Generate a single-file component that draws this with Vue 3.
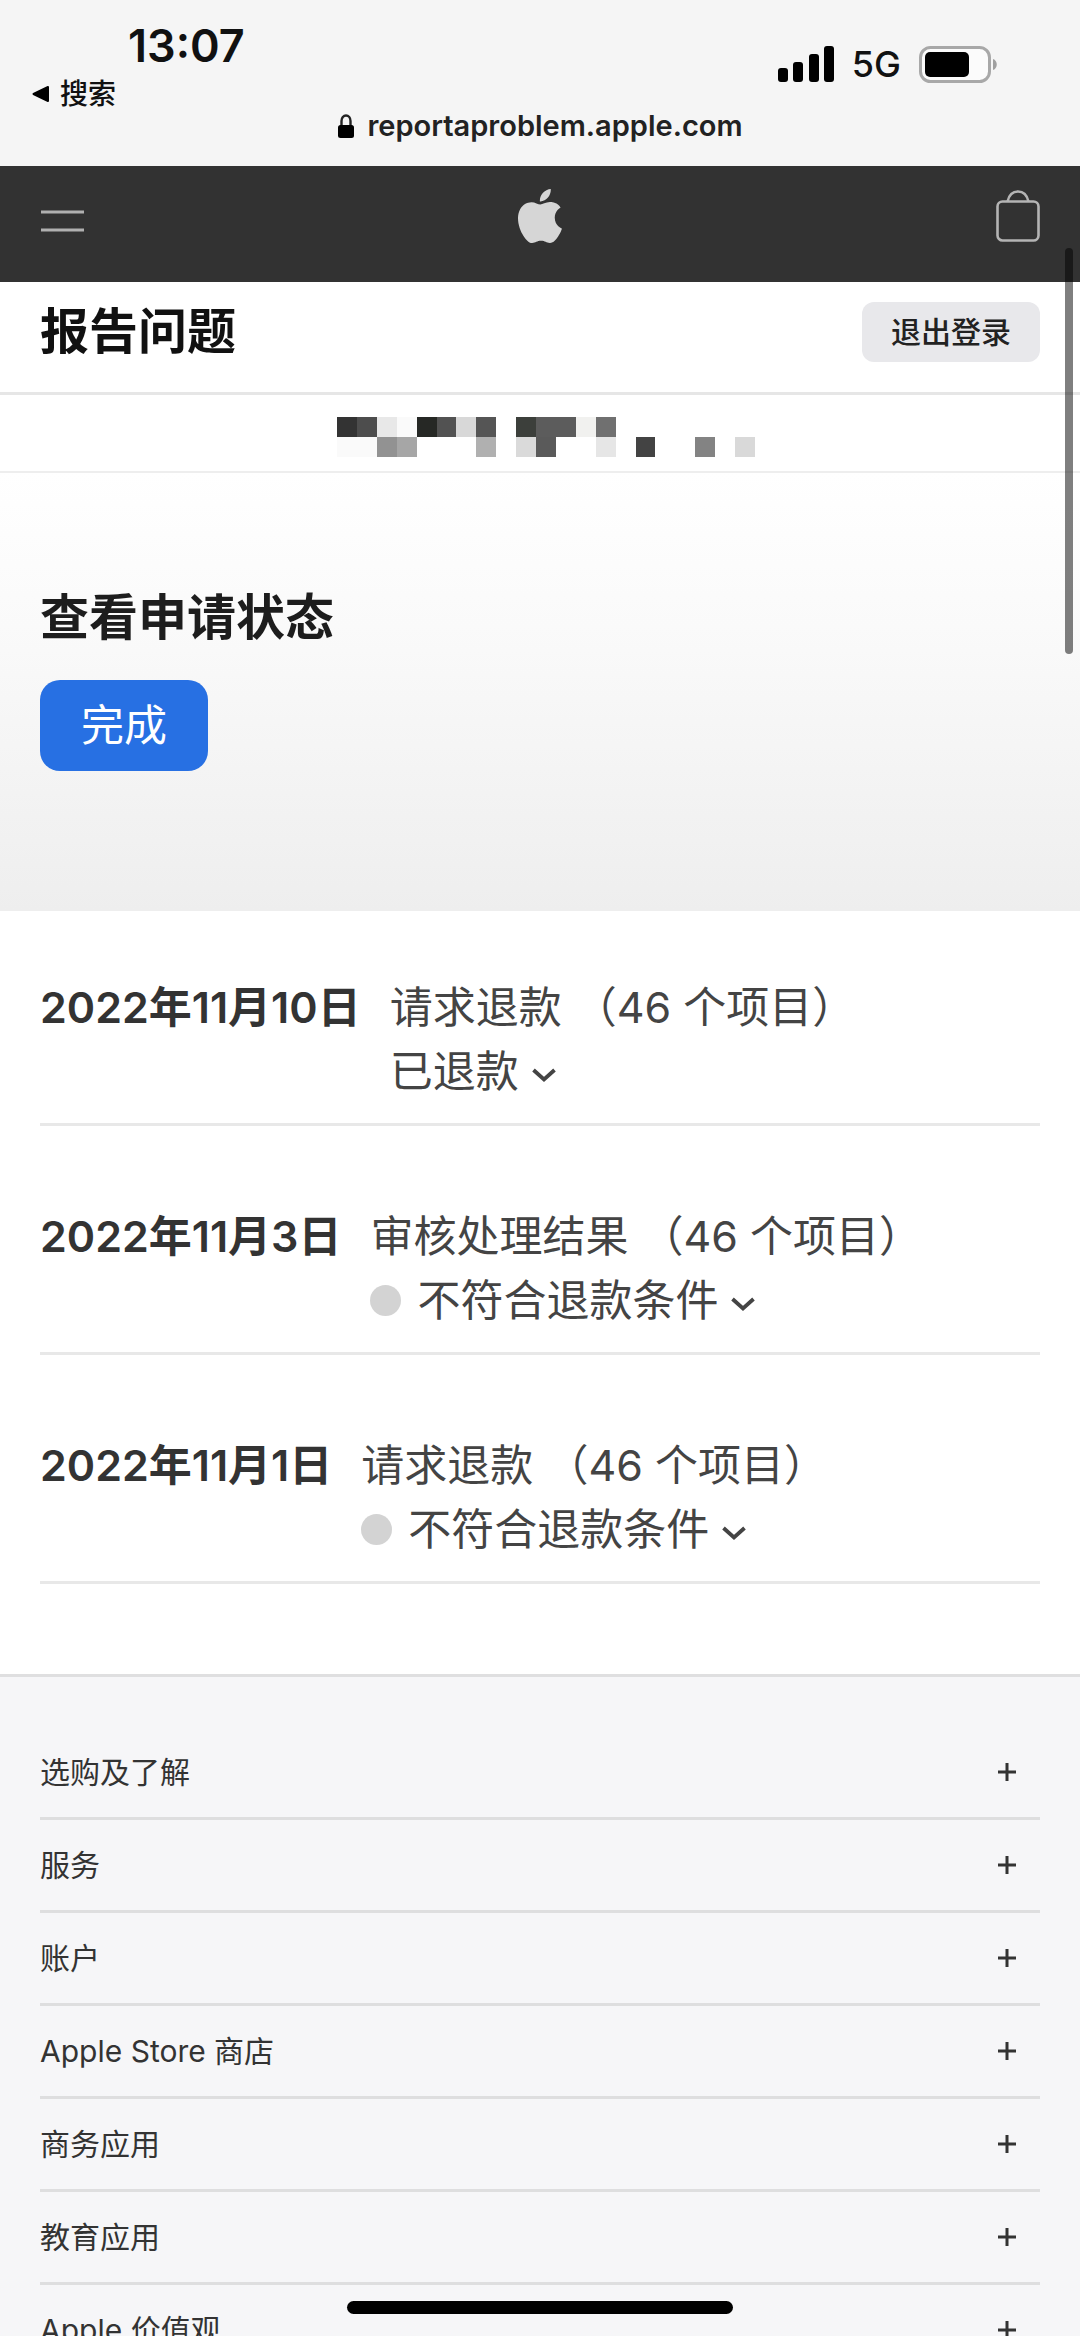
<script setup>
import { ref } from "vue";

const requests = [
  { date: "2022年11月10日", title: "请求退款", count: 46, status: "已退款", dot: false },
  { date: "2022年11月3日", title: "审核处理结果", count: 46, status: "不符合退款条件", dot: true },
  { date: "2022年11月1日", title: "请求退款", count: 46, status: "不符合退款条件", dot: true },
];

const sections = ["选购及了解", "服务", "账户", "Apple Store 商店", "商务应用", "教育应用", "Apple 价值观"];

const opened = ref(null); // index of the expanded request

// masked account name: [column, row, color]
const mosaic = [
  [0, 0, "#333333"], [1, 0, "#4d4d4d"], [2, 0, "#e8e8e8"], [3, 0, "#fafafa"],
  [4, 0, "#262825"], [5, 0, "#525252"], [6, 0, "#d8d8d8"], [7, 0, "#555555"],
  [9, 0, "#3c3f3b"], [10, 0, "#5c5c5c"], [11, 0, "#5c5c5c"], [12, 0, "#f1f1ef"], [13, 0, "#707070"],
  [0, 1, "#fafafa"], [1, 1, "#fafafa"], [2, 1, "#929292"], [3, 1, "#a6a6a6"],
  [7, 1, "#b0b0b0"], [9, 1, "#dadada"], [10, 1, "#5a5a5a"], [13, 1, "#e6e6e6"],
  [15, 1, "#434343"], [18, 1, "#838383"], [20, 1, "#d9d9d9"],
];

function toggle(i) {
  opened.value = opened.value === i ? null : i;
}
</script>

<template>
  <div class="screen">
    <header class="chrome">
      <div class="chrome-left">
        <time class="clock">13:07</time>
        <a class="back" href="#">
          <svg width="18" height="18" viewBox="0 0 18 18" aria-hidden="true">
            <path d="M1.5 9 16 2v14z" fill="#000" stroke="#000" stroke-width="2" stroke-linejoin="round" />
          </svg>
          搜索
        </a>
      </div>
      <div class="address">
        <svg width="18" height="24" viewBox="0 0 18 24" aria-hidden="true">
          <path d="M4.5 12V7a4.5 5.5 0 0 1 9 0v5" fill="none" stroke="#222" stroke-width="2.4" />
          <rect x="1" y="11" width="16" height="13" rx="2.5" />
        </svg>
        <span>reportaproblem.apple.com</span>
      </div>
      <div class="indicators">
        <svg width="56" height="36" viewBox="0 0 56 36" aria-hidden="true">
          <rect x="0" y="22" width="10" height="14" rx="3" />
          <rect x="15" y="16" width="10" height="20" rx="3" />
          <rect x="31" y="8" width="10" height="28" rx="3" />
          <rect x="46" y="0" width="10" height="36" rx="3" />
        </svg>
        <span class="network">5G</span>
        <svg width="79" height="37" viewBox="0 0 79 37" aria-hidden="true">
          <rect x="1.5" y="1.5" width="69" height="34" rx="10" fill="#fbfbfb" stroke="#a8a8a8" stroke-width="3" />
          <rect x="6" y="6" width="44" height="25" rx="5" />
          <path d="M74 13c5 1.500 5 9.500 0 11z" fill="#a0a0a0" />
        </svg>
      </div>
    </header>

    <nav class="globalnav">
      <button class="icon-button" type="button" aria-label="菜单">
        <svg width="44" height="24" viewBox="0 0 44 24">
          <path d="M1 3h43M1 21h43" stroke="#b0b0b0" stroke-width="3" />
        </svg>
      </button>
      <a class="logo" href="#" aria-label="Apple">
        <svg width="54" height="54" viewBox="0 0 24 24">
          <path fill="#d6d6d6" d="M12.152 6.896c-.948 0-2.415-1.078-3.96-1.04-2.04.027-3.91 1.183-4.961 3.014-2.117 3.675-.546 9.103 1.519 12.09 1.013 1.454 2.208 3.09 3.792 3.039 1.52-.065 2.09-.987 3.935-.987 1.831 0 2.35.987 3.96.948 1.637-.026 2.676-1.48 3.676-2.948 1.156-1.688 1.636-3.325 1.662-3.415-.039-.013-3.182-1.221-3.22-4.857-.026-3.04 2.48-4.494 2.597-4.559-1.429-2.09-3.623-2.324-4.39-2.376-2-.156-3.675 1.09-4.61 1.09zM15.53 3.83c.843-1.012 1.4-2.427 1.245-3.83-1.207.052-2.662.805-3.532 1.818-.78.896-1.454 2.338-1.273 3.714 1.338.104 2.715-.688 3.559-1.701" />
        </svg>
      </a>
      <button class="icon-button bag" type="button" aria-label="购物袋">
        <svg width="44" height="52" viewBox="0 0 44 52" fill="none" stroke="#b4b4b4" stroke-width="2.6">
          <rect x="1.500" y="11.500" width="41" height="39" rx="5" />
          <path d="M11.500 11.500C13 5 17 1.500 22 1.500s9 3.500 10.500 10" />
        </svg>
      </button>
    </nav>

    <div class="titlebar">
      <h1>报告问题</h1>
      <button class="signout" type="button">退出登录</button>
    </div>

    <div class="account">
      <svg width="418" height="40" viewBox="0 0 21 2" preserveAspectRatio="none" shape-rendering="crispEdges" aria-hidden="true">
        <rect v-for="[x, y, color] in mosaic" :key="`${x}-${y}`" :x="x" :y="y" width="1" height="1" :fill="color" />
      </svg>
    </div>

    <section class="hero">
      <h2>查看申请状态</h2>
      <button class="done" type="button">完成</button>
    </section>

    <main class="requests">
      <article v-for="(item, i) in requests" :key="item.date" class="request">
        <h3>{{ item.date }}</h3>
        <div>
          <p>{{ item.title }} （{{ item.count }} 个项目）</p>
          <button class="status" type="button" :aria-expanded="opened === i" @click="toggle(i)">
            <span v-if="item.dot" class="dot"></span>
            <span>{{ item.status }}</span>
            <svg class="chevron" width="26" height="16" viewBox="0 0 26 16" aria-hidden="true">
              <path d="M2.500 3 13 12.500 23.500 3" fill="none" stroke="#444" stroke-width="3.800" />
            </svg>
          </button>
        </div>
      </article>
    </main>

    <footer class="footer">
      <button v-for="name in sections" :key="name" class="section" type="button">
        <span>{{ name }}</span>
        <svg width="18" height="18" viewBox="0 0 18 18" aria-hidden="true">
          <path d="M0 9h18M9 0v18" stroke="#333" stroke-width="3" />
        </svg>
      </button>
    </footer>

    <div class="scrollbar"></div>
    <div class="home-indicator"></div>
  </div>
</template>

<style>
body {
  margin: 0;
}
</style>

<style scoped>
.screen {
  --gutter: 40px;
  position: relative;
  height: 100vh;
  overflow: hidden;
  background: #fff;
  color: #111;
  font-family: Inter, "Noto Sans CJK SC", sans-serif;
}

h1,
h2,
h3,
p {
  margin: 0;
}

button {
  border: 0;
  padding: 0;
  background: none;
  color: inherit;
  font: inherit;
}

a {
  color: inherit;
  text-decoration: none;
}

svg {
  display: block;
  flex: none;
}

.chrome {
  display: grid;
  grid-template-columns: 1fr auto 1fr;
  box-sizing: border-box;
  height: 166px;
  padding: 20px 32px;
  background: #f5f5f5;
}

.chrome-left {
  display: flex;
  flex-direction: column;
  align-items: flex-start;
  gap: 4px;
}

.clock {
  padding-left: 96px;
  font-size: 45px;
  font-weight: 600;
  line-height: 52px;
}

.back {
  display: flex;
  align-items: center;
  gap: 10px;
  font-size: 28px;
  font-weight: 500;
  line-height: 36px;
}

.address {
  display: flex;
  align-items: center;
  align-self: end;
  gap: 12px;
  color: #222;
  font-size: 29px;
  font-weight: 600;
  line-height: 40px;
}

.indicators {
  display: flex;
  align-items: center;
  align-self: start;
  justify-content: flex-end;
  gap: 18px;
  padding: 24px 50px 0 0;
}

.network {
  font-size: 36px;
  font-weight: 500;
  line-height: 40px;
}

.globalnav {
  display: flex;
  align-items: center;
  justify-content: space-between;
  box-sizing: border-box;
  height: 116px;
  padding: 0 var(--gutter);
  background: #323232;
}

.icon-button {
  padding-bottom: 6px;
}

.logo,
.bag {
  padding-bottom: 16px;
}

.titlebar {
  display: flex;
  align-items: flex-start;
  justify-content: space-between;
  padding: 20px var(--gutter) 30px;
  border-bottom: 3px solid #e6e6e6;
}

.titlebar h1,
.hero h2 {
  font-size: 49px;
  font-weight: 600;
  line-height: 60px;
}

.signout {
  padding: 0 29px;
  border-radius: 12px;
  background: #e8e8eb;
  color: #222;
  font-size: 30px;
  font-weight: 500;
  line-height: 60px;
}

.account {
  display: flex;
  justify-content: center;
  padding: 22px 0 14px 12px;
  border-bottom: 2px solid #eee;
}

.hero {
  padding: 115px var(--gutter) 140px;
  background: linear-gradient(#fff, #fafafa 35%, #eee);
}

.hero h2 {
  color: #1d1d1d;
}

.done {
  margin-top: 32px;
  padding: 0 41px;
  border-radius: 20px;
  background: #2770e3;
  color: #fff;
  font-size: 43px;
  line-height: 91px;
}

.requests {
  padding: 0 var(--gutter) 90px;
}

.request {
  display: flex;
  gap: 29px;
  padding: 64px 0 20px;
  border-bottom: 3px solid #e8e8e8;
  color: #444;
  font-size: 43px;
  line-height: 64px;
}

.request h3 {
  color: #333;
  font-size: 43px;
  font-weight: 600;
}

.request + .request {
  padding-top: 78px;
}

.status {
  display: flex;
  align-items: center;
}

.dot {
  width: 31px;
  height: 31px;
  margin-right: 16px;
  border-radius: 50%;
  background: #d3d3d3;
}

.chevron {
  margin: 8px 0 0 12px;
}

.footer {
  padding: 50px var(--gutter) 0;
  border-top: 3px solid #dfdfe0;
  background: #f6f6f8;
}

.section {
  display: flex;
  align-items: center;
  justify-content: space-between;
  width: 100%;
  padding: 0 24px 0 0;
  border-bottom: 3px solid #dededf;
  color: #333;
  font-size: 30px;
  line-height: 90px;
}

.scrollbar {
  position: absolute;
  top: 248px;
  right: 7px;
  width: 8px;
  height: 406px;
  border-radius: 4px;
  background: rgba(0, 0, 0, 0.5);
}

.home-indicator {
  position: absolute;
  bottom: 22px;
  left: 50%;
  width: 386px;
  height: 13px;
  border-radius: 7px;
  background: #000;
  transform: translateX(-50%);
}
</style>
